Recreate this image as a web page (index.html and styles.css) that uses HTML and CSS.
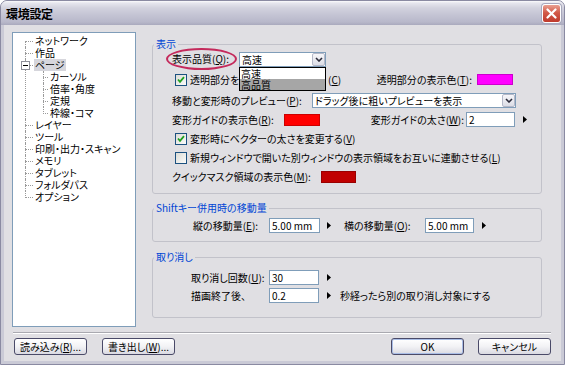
FILE: index.html
```html
<!DOCTYPE html>
<html lang="ja">
<head>
<meta charset="utf-8">
<title>環境設定</title>
<link rel="stylesheet" href="styles.css">
</head>
<body>
<div class="window">
  <div class="titlebar">
    <span class="title">環境設定</span>
    <span class="close"><svg width="11" height="11" viewBox="0 0 11 11"><path d="M1.5 1.5 L9.5 9.5 M9.5 1.5 L1.5 9.5" stroke="#fff" stroke-width="2.2" stroke-linecap="round"/></svg></span>
  </div>
  <div class="client">
    <div class="main">
      <div class="tree">
        <ul class="root">
          <li><span class="t">ネットワーク</span></li>
          <li><span class="t">作品</span></li>
          <li><span class="exp"></span><span class="t sel">ページ</span>
            <ul class="sub">
              <li><span class="t">カーソル</span></li>
              <li><span class="t">倍率・角度</span></li>
              <li><span class="t">定規</span></li>
              <li><span class="t">枠線・コマ</span></li>
            </ul>
          </li>
          <li><span class="t">レイヤー</span></li>
          <li><span class="t">ツール</span></li>
          <li><span class="t">印刷・出力・スキャン</span></li>
          <li><span class="t">メモリ</span></li>
          <li><span class="t">タブレット</span></li>
          <li><span class="t">フォルダパス</span></li>
          <li><span class="t">オプション</span></li>
        </ul>
      </div>
      <div class="panels">
        <fieldset class="group g1">
          <legend>表示</legend>
          <div class="row r1">
            <span class="lbl w67 circled">表示品質(<u>Q</u>):</span>
            <div class="select s1">
              <span class="val">高速</span>
              <span class="dbtn"><svg width="8" height="5" viewBox="0 0 8 5"><polyline points="1,1 4,4 7,1" fill="none" stroke="#2b2b3a" stroke-width="1.6"/></svg></span>
              <div class="dd">
                <div class="opt">高速</div>
                <div class="opt sel">高品質</div>
              </div>
            </div>
          </div>
          <div class="row r2">
            <span class="cb"><svg width="8" height="8" viewBox="0 0 8 8"><polyline points="1,3.5 3,5.8 7,1.2" fill="none" stroke="#21a121" stroke-width="1.8"/></svg></span>
            <span class="cbtext">透明部分を</span><span class="covered"></span><span>(<u>C</u>)</span>
            <span class="rlbl">透明部分の表示色(<u>T</u>):</span>
            <span class="swatch magenta mr28"></span>
          </div>
          <div class="row r3">
            <span class="lbl">移動と変形時のプレビュー(<u>P</u>):</span>
            <div class="select s2">
              <span class="val">ドラッグ後に粗いプレビューを表示</span>
              <span class="dbtn"><svg width="8" height="5" viewBox="0 0 8 5"><polyline points="1,1 4,4 7,1" fill="none" stroke="#2b2b3a" stroke-width="1.6"/></svg></span>
            </div>
          </div>
          <div class="row r4">
            <span class="lbl w112">変形ガイドの表示色(<u>R</u>):</span>
            <span class="swatch red"></span>
            <span class="rlbl r-gap2">変形ガイドの太さ(<u>W</u>):</span>
            <span class="input w49">2</span>
            <span class="tri ml8 mr14"><svg width="4" height="7" viewBox="0 0 4 7"><polygon points="0,0 4,3.5 0,7" fill="#000"/></svg></span>
          </div>
          <div class="row r5">
            <span class="cb"><svg width="8" height="8" viewBox="0 0 8 8"><polyline points="1,3.5 3,5.8 7,1.2" fill="none" stroke="#21a121" stroke-width="1.8"/></svg></span>
            <span>変形時にベクターの太さを変更する(<u>V</u>)</span>
          </div>
          <div class="row r6">
            <span class="cb"></span>
            <span>新規ウィンドウで開いた別ウィンドウの表示領域をお互いに連動させる(<u>L</u>)</span>
          </div>
          <div class="row r7">
            <span class="lbl w149">クイックマスク領域の表示色(<u>M</u>):</span>
            <span class="swatch darkred"></span>
          </div>
        </fieldset>

        <fieldset class="group g2">
          <legend>Shiftキー併用時の移動量</legend>
          <div class="row">
            <span class="lbl w76">縦の移動量(<u>E</u>):</span>
            <span class="input w51">5.00 mm</span>
            <span class="tri ml7"><svg width="4" height="7" viewBox="0 0 4 7"><polygon points="0,0 4,3.5 0,7" fill="#000"/></svg></span>
            <span class="lbl w81 ml13">横の移動量(<u>O</u>):</span>
            <span class="input w49">5.00 mm</span>
            <span class="tri ml8"><svg width="4" height="7" viewBox="0 0 4 7"><polygon points="0,0 4,3.5 0,7" fill="#000"/></svg></span>
          </div>
        </fieldset>

        <fieldset class="group g3">
          <legend>取り消し</legend>
          <div class="row">
            <span class="lbl w78">取り消し回数(<u>U</u>):</span>
            <span class="input w50">30</span>
            <span class="tri ml8"><svg width="4" height="7" viewBox="0 0 4 7"><polygon points="0,0 4,3.5 0,7" fill="#000"/></svg></span>
          </div>
          <div class="row">
            <span class="lbl w78">描画終了後、</span>
            <span class="input w50">0.2</span>
            <span class="tri ml8"><svg width="4" height="7" viewBox="0 0 4 7"><polygon points="0,0 4,3.5 0,7" fill="#000"/></svg></span>
            <span class="ml9">秒経ったら別の取り消し対象にする</span>
          </div>
        </fieldset>
      </div>
    </div>
    <div class="sep"></div>
    <div class="buttons">
      <button class="btn">読み込み(<u>R</u>)...</button>
      <button class="btn">書き出し(<u>W</u>)...</button>
      <span class="spacer"></span>
      <button class="btn default">OK</button>
      <button class="btn">キャンセル</button>
    </div>
  </div>
</div>
</body>
</html>
```

FILE: styles.css
```css
* { box-sizing: border-box; }

body {
  margin: 0;
  font-family: "Noto Sans CJK JP", "Noto Sans", sans-serif;
  font-size: 10px;
  color: #000;
  font-feature-settings: "palt";
  background: #fff;
}

u { text-decoration: underline; text-underline-offset: 1px; }

.window {
  width: 565px;
  height: 365px;
  border: 1px solid #8a8aa2;
  border-radius: 7px 7px 0 0;
  background: #cacad6;
  display: flex;
  flex-direction: column;
  overflow: hidden;
}

.titlebar {
  height: 24px;
  flex: none;
  display: flex;
  align-items: center;
  justify-content: space-between;
  padding: 0 3px 0 5px;
  background: linear-gradient(#fbfbfd 0, #e6e6ee 2px, #d2d2de 7px, #c4c4d4 14px, #b8b8ca 21px, #a9a9bd 24px);
}

.title {
  font-size: 12px;
  font-weight: bold;
  letter-spacing: -0.3px;
  color: #000;
}

.close {
  width: 19px;
  height: 19px;
  border: 1px solid #fff;
  border-radius: 3px;
  background: linear-gradient(#e9a091, #d25a48 45%, #bf3a2c);
  box-shadow: 0 0 0 1px #a8a8bc;
  display: flex;
  align-items: center;
  justify-content: center;
}

.client {
  flex: 1;
  margin: 0 3px 3px;
  background: #e0dfe3;
  padding: 7px 8px 6px;
  display: flex;
  flex-direction: column;
}

.main {
  height: 295px;
  flex: none;
  display: flex;
  gap: 16px;
}

/* Tree */
.tree {
  width: 124px;
  height: 295px;
  flex: none;
  border: 1px solid #7f9db9;
  background: #fff;
  padding-top: 2px;
}

.tree ul { list-style: none; margin: 0; padding: 0; }
.tree .root { margin-left: 12px; }
.tree .sub { margin-left: 9px; }

.tree li {
  position: relative;
  padding-left: 9px;
  line-height: 12px;
  white-space: nowrap;
}
.tree .sub li { padding-left: 6px; }

.tree li::before {
  content: "";
  position: absolute;
  left: 0;
  top: 6px;
  width: 8px;
  border-top: 1px dotted #9a9a9a;
}
.tree .sub li::before { width: 5px; }

.tree li::after {
  content: "";
  position: absolute;
  left: 0;
  top: 0;
  bottom: 0;
  border-left: 1px dotted #9a9a9a;
}
.tree li:last-child::after { bottom: auto; height: 7px; }
.tree .root > li:first-child::after { top: 6px; }

.tree .t { display: inline-block; padding: 0 1px; height: 12px; }
.tree .t.sel { background: #d6d6dc; }

.tree .exp {
  position: absolute;
  left: -4px;
  top: 2px;
  width: 9px;
  height: 9px;
  border: 1px solid #8e8f99;
  background: #fff;
  z-index: 1;
}
.tree .exp::after {
  content: "";
  position: absolute;
  left: 1px;
  top: 3px;
  width: 5px;
  height: 1px;
  background: #000;
}

/* Panels */
.panels {
  width: 390px;
  flex: none;
  display: flex;
  flex-direction: column;
}

.group {
  margin: 0;
  min-width: 0;
  border: 1px solid #c2c2ca;
  border-radius: 3px;
  padding: 0;
}

.group legend {
  margin-left: 1px;
  padding: 0 2px;
  line-height: 10px;
  height: 10px;
  font-size: 10px;
  color: #0046d5;
}

.g1 { margin-top: 7px; padding-bottom: 7px; }
.g2 { margin-top: 9px; padding: 2px 0 6px; }
.g3 { margin-top: 10px; padding: 6px 0 13px; }

.row {
  display: flex;
  align-items: center;
  white-space: nowrap;
}
.g1 .row { padding-left: 19px; height: 19px; }
.g1 .r1 { height: 20px; }
.g1 .r2 { height: 21px; }
.g1 .r3 { height: 20px; }
.g2 .row { padding-left: 40px; height: 20px; }
.g3 .row { padding-left: 38px; height: 18px; }

.lbl { flex: none; }
.w67 { width: 67px; }
.w76 { width: 76px; }
.w78 { width: 78px; }
.w81 { width: 81px; }
.w112 { width: 112px; }
.w149 { width: 149px; }

.circled { position: relative; height: 20px; line-height: 20px; }
.circled::after {
  content: "";
  position: absolute;
  left: -6px;
  top: -1px;
  width: 67px;
  height: 18px;
  border: 2px solid #c42a5c;
  border-radius: 50%;
}

.rlbl { margin-left: auto; margin-right: 5px; }
.r-gap2 { margin-right: 2px; }

.ml7 { margin-left: 7px; }
.ml8 { margin-left: 8px; }
.ml9 { margin-left: 9px; }
.ml13 { margin-left: 13px; }
.mr14 { margin-right: 14px; }
.mr28 { margin-right: 28px; }

/* Controls */
.select {
  position: relative;
  display: flex;
  height: 15px;
  border: 1px solid #7f9db9;
  background: #fff;
  flex: none;
}
.s1 { width: 87px; }
.s2 { width: 204px; margin-left: auto; margin-right: 25px; }
.select .val { flex: 1; padding-left: 2px; line-height: 13px; overflow: hidden; }
.select .dbtn {
  width: 13px;
  margin: 0;
  border: 1px solid #b4b8c8;
  border-radius: 2px;
  background: linear-gradient(#f6f6f9, #dcdde6);
  display: flex;
  align-items: center;
  justify-content: center;
}

.dd {
  position: absolute;
  left: -1px;
  top: 14px;
  width: 87px;
  border: 1px solid #000;
  background: #fff;
  z-index: 2;
}
.dd .opt { height: 11px; line-height: 11px; padding-left: 1px; }
.dd .opt.sel { background: #a6a6a6; }

.cb {
  width: 12px;
  height: 12px;
  margin: 0 3px;
  flex: none;
  border: 1px solid #1c5180;
  background: linear-gradient(135deg, #dcdcd6, #fbfbfa);
  display: flex;
  align-items: center;
  justify-content: center;
}

.cbtext { flex: none; width: 50px; }
.covered { flex: none; width: 88px; }

.swatch { flex: none; width: 36px; height: 12px; border: 1px solid rgba(0,0,0,0.2); }
.magenta { background: #ff00ff; height: 11px; }
.red { background: #ff0000; }
.darkred { background: #c00000; width: 35px; }

.input {
  flex: none;
  height: 15px;
  border: 1px solid #7f9db9;
  background: #fff;
  padding-left: 2px;
  line-height: 13px;
}
.w49 { width: 49px; }
.w50 { width: 50px; }
.w51 { width: 51px; }

.tri { flex: none; display: flex; align-items: center; }

/* Bottom */
.sep {
  height: 2px;
  flex: none;
  border-top: 1px solid #a9a9b0;
  border-bottom: 1px solid #fff;
  margin: 5px 2px 0 1px;
}

.buttons {
  margin-top: 4px;
  height: 17px;
  flex: none;
  display: flex;
  padding: 0 2px;
  gap: 15px;
}
.spacer { flex: 1; margin-left: -15px; }
.btn {
  width: 73px;
  height: 17px;
  padding: 0;
  border: 1px solid #4a4a68;
  border-radius: 3px;
  background: linear-gradient(#ffffff, #f2f2f5 50%, #dadae2);
  font: inherit;
  font-size: 10px;
  line-height: 15px;
  color: #000;
}
.btn.default { box-shadow: inset 0 0 0 1px #a9bde6; margin-right: -1px; }
```
